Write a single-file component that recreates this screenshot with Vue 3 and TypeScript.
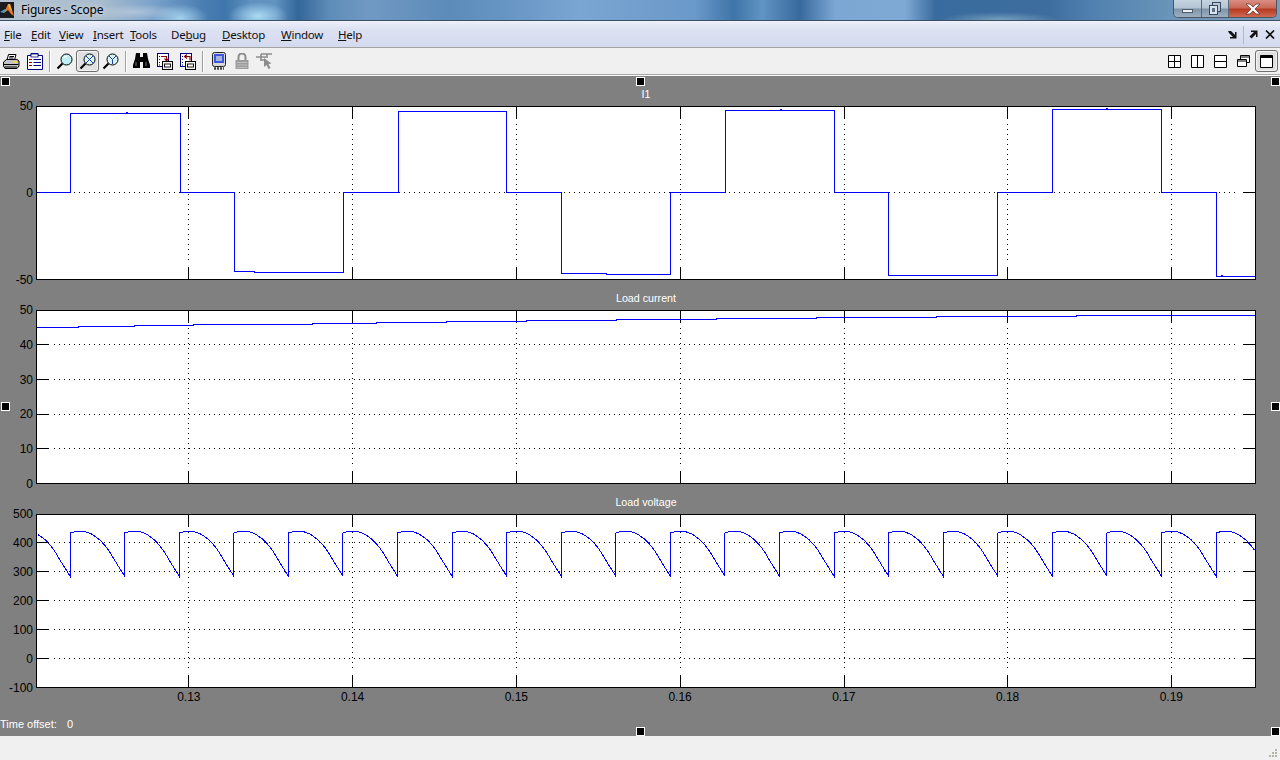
<script setup lang="ts">
interface MenuItem { before: string; key: string; after: string; width: number }
interface Plot { title: string; labels: string[]; ticks: number[]; wave: string }

const W = 1220
const H = 174
const gridX: number[] = [152, 316, 480, 644, 808, 971, 1135]
const xLabels: string[] = ['0.13', '0.14', '0.15', '0.16', '0.17', '0.18', '0.19']

const menu: MenuItem[] = [
  { before: '', key: 'F', after: 'ile', width: 27 },
  { before: '', key: 'E', after: 'dit', width: 28 },
  { before: '', key: 'V', after: 'iew', width: 34 },
  { before: '', key: 'I', after: 'nsert', width: 37 },
  { before: '', key: 'T', after: 'ools', width: 41 },
  { before: 'De', key: 'b', after: 'ug', width: 51 },
  { before: '', key: 'D', after: 'esktop', width: 59 },
  { before: '', key: 'W', after: 'indow', width: 57 },
  { before: '', key: 'H', after: 'elp', width: 40 },
]

function squareWave(): string {
  const edges: Array<[number, number]> = [
    [34, 7.5], [90, 6.5], [91, 7.5], [144, 86.5], [198, 165.5], [218, 166.5], [307, 86.5], [362, 5.5], [470, 86.5], [525, 167.5], [570, 168.5],
    [634, 86.5], [689, 4.5], [744, 3.5], [745, 4.5], [798, 86.5], [852, 169.5], [961, 86.5], [1016, 3.5], [1070, 2.5], [1071, 3.5], [1125, 86.5], [1180, 170.5], [1185, 169.5], [1186, 170.5],
  ]
  let y = 86.5
  const pts: string[] = [`0,${y}`]
  for (const [x, level] of edges) {
    pts.push(`${x + 0.5},${y}`, `${x + 0.5},${level}`)
    y = level
  }
  pts.push(`${W},${y}`)
  return pts.join(' ')
}

function currentWave(): string {
  const steps: Array<[number, number]> = [
    [0, 17.5], [42, 16.5], [98, 15.5], [157, 14.5], [216, 14.5], [276, 13.5], [340, 12.5], [410, 11.5],
    [490, 10.5], [580, 9.5], [680, 8.5], [780, 7.5], [900, 6.5], [1040, 5.5],
  ]
  const pts: string[] = []
  steps.forEach(([x, y], i) => {
    const next = i + 1 < steps.length ? steps[i + 1][0] : W
    pts.push(`${x},${y}`, `${next},${y}`)
  })
  return pts.join(' ')
}

function voltageWave(): string {
  const period = 54.57
  const phase0 = 34
  const shape: Array<[number, number]> = [
    [0, 19], [0.06, 18], [0.18, 17], [0.3, 18], [0.4, 20], [0.55, 26], [0.65, 32], [0.73, 38], [0.85, 49], [1, 62],
  ]
  const at = (p: number): number => {
    for (let i = 1; i < shape.length; i++) {
      if (p <= shape[i][0]) {
        const [a, ya] = shape[i - 1]
        const [b, yb] = shape[i]
        return ya + ((p - a) / (b - a)) * (yb - ya)
      }
    }
    return 62
  }
  const pts: string[] = []
  for (let n = -1; n < 23; n++) {
    const start = phase0 + n * period
    for (let k = 0; k <= 24; k++) {
      const x = start + (k / 24) * period
      if (x < 0 || x > W) continue
      pts.push(`${x.toFixed(1)},${at(k / 24).toFixed(1)}`)
    }
  }
  return pts.join(' ')
}

const plots: Plot[] = [
  { title: 'I1', labels: ['50', '0', '-50'], ticks: [86], wave: squareWave() },
  { title: 'Load current', labels: ['50', '40', '30', '20', '10', '0'], ticks: [34, 69, 104, 138], wave: currentWave() },
  { title: 'Load voltage', labels: ['500', '400', '300', '200', '100', '0', '-100'], ticks: [28, 57, 86, 115, 144], wave: voltageWave() },
]

const handles: string[] = ['tl', 'tc', 'tr', 'ml', 'mr', 'bc', 'br']
const gripDots: Array<[number, number]> = [[8, 0], [8, 3], [5, 3], [8, 6], [5, 6], [2, 6]]
</script>

<template>
  <div class="window">
    <header class="titlebar">
      <svg class="logo" width="14" height="16" viewBox="0 0 14 16">
        <rect width="14" height="16" fill="#1a1a20" />
        <path d="M0 10 L5 7 L7 8 L4 11 Z" fill="#3f9fc8" />
        <path d="M4 11 L8 2 L10 2 L14 14 L11 12 L8 8 Z" fill="#e8792a" />
        <path d="M8 2 L10 2 L12 9 L9 6 Z" fill="#f3b14a" />
      </svg>
      <span class="title-text">Figures - Scope</span>
      <div class="caption">
        <button class="cap cap-min" type="button" aria-label="Minimize"><i class="min-bar"></i></button>
        <button class="cap cap-max" type="button" aria-label="Restore">
          <svg width="12" height="13" viewBox="0 0 12 13">
            <rect x="3.5" y="0.5" width="8" height="9" fill="#b8c8d8" stroke="#39495a" />
            <rect x="0.5" y="3.5" width="8" height="9" fill="#d8e2ec" stroke="#39495a" />
            <rect x="3" y="6" width="3" height="4" fill="#5d7186" />
          </svg>
        </button>
        <button class="cap cap-close" type="button" aria-label="Close">
          <svg width="16" height="12" viewBox="0 0 16 12">
            <path d="M1 1 H5 L8 4 L11 1 H15 L10 6 L15 11 H11 L8 8 L5 11 H1 L6 6 Z" fill="#f4f4f4" stroke="#6e3a36" stroke-width="0.8" />
          </svg>
        </button>
      </div>
    </header>

    <nav class="menubar">
      <span v-for="m in menu" :key="m.key + m.after" class="menu-item" :style="{ width: m.width + 'px' }">{{ m.before }}<u>{{ m.key }}</u>{{ m.after }}</span>
      <div class="menu-end">
        <svg width="9" height="9" viewBox="0 0 9 9"><path d="M0 1 H3 L7 5 V2 H8.5 V8.5 H2 V7 H5 L1 3 Z" fill="#111" /></svg>
        <i class="menu-sep"></i>
        <svg width="9" height="9" viewBox="0 0 9 9"><path d="M8.5 0.5 H2 V2 H5 L0.5 6.5 L2.5 8.5 L7 4 V7 H8.5 Z" fill="#111" /></svg>
        <svg width="10" height="9" viewBox="0 0 10 9"><path d="M1 0.5 L9 8.5 M9 0.5 L1 8.5" stroke="#111" stroke-width="1.7" fill="none" /></svg>
      </div>
    </nav>

    <div class="toolbar">
      <button class="tool" type="button" aria-label="Print">
        <svg width="17" height="17" viewBox="0 0 17 17">
          <path d="M5.5 1.5 H13 L11.5 7 H4 Z" fill="#fff" stroke="#000" />
          <path d="M6.5 3.5 H11 M6 5 H10.5" stroke="#000" />
          <path d="M3.5 6.5 H14 L16 8 V13 L14 15.5 H2 L0.5 13 V9 Z" fill="#c4c4c4" stroke="#000" />
          <path d="M1 11.5 H15.5 M2 14 H14" stroke="#000" />
          <rect x="11" y="8" width="3" height="2" fill="#e8d860" />
        </svg>
      </button>
      <button class="tool" type="button" aria-label="Print preview">
        <svg width="16" height="17" viewBox="0 0 16 17">
          <path d="M0.5 2.5 H4 V0.5 H11 V2.5 H15.5 V16.5 H0.5 Z" fill="#fff" stroke="#000080" />
          <rect x="4" y="1" width="7" height="3" fill="#fff" stroke="#000080" stroke-width="0.8" />
          <path d="M2 6.5 H5 M2 9.5 H5 M2 12.5 H5" stroke="#a00000" />
          <path d="M6.5 6.5 H14 M6.5 9.5 H14 M6.5 12.5 H14" stroke="#000080" />
        </svg>
      </button>
      <i class="tool-sep"></i>
      <button class="tool" type="button" aria-label="Zoom in">
        <svg width="17" height="17" viewBox="0 0 17 17">
          <circle cx="10.5" cy="6.5" r="5.5" fill="#bfeff2" stroke="#000" />
          <path d="M8 4.5 A4 4 0 0 1 11 3.5" stroke="#fff" fill="none" stroke-width="1.4" />
          <path d="M6.5 10.5 L1.5 15.5" stroke="#000" stroke-width="2.2" />
        </svg>
      </button>
      <button class="tool tool-on" type="button" aria-label="Zoom X">
        <svg width="17" height="17" viewBox="0 0 17 17">
          <circle cx="10.5" cy="6.5" r="5.5" fill="#d8f4f6" stroke="#000" />
          <path d="M7 3 L14 10 M14 3 L7 10" stroke="#1a3fa8" />
          <path d="M6.5 10.5 L1.5 15.5" stroke="#000" stroke-width="2.2" />
        </svg>
      </button>
      <button class="tool" type="button" aria-label="Zoom Y">
        <svg width="17" height="17" viewBox="0 0 17 17">
          <circle cx="10.5" cy="6.5" r="5.5" fill="#d8f4f6" stroke="#000" />
          <path d="M7 3 L10.5 6.5 L14 3 M10.5 6.5 V11" stroke="#1a3fa8" fill="none" />
          <path d="M6.5 10.5 L1.5 15.5" stroke="#000" stroke-width="2.2" />
        </svg>
      </button>
      <i class="tool-sep tool-sep-wide"></i>
      <button class="tool" type="button" aria-label="Autoscale">
        <svg width="17" height="16" viewBox="0 0 17 16">
          <path d="M3 0 H7 V4 H10 V0 H14 L15 6 L17 12 V15 H10 V9 H7 V15 H0 V12 L2 6 Z" fill="#000" />
          <path d="M3 9 V13 M13 9 V13" stroke="#777" />
        </svg>
      </button>
      <button class="tool" type="button" aria-label="Save axes">
        <svg width="16" height="17" viewBox="0 0 16 17">
          <rect x="0.5" y="0.5" width="11" height="13" fill="#fff" stroke="#000080" />
          <path d="M2 3.5 H3 M2 6.5 H3 M2 9.5 H3 M2 12 H3 M5 12 H8" stroke="#000080" />
          <path d="M4 3.5 H9.5 V7 M7.5 5.5 L9.5 8 L11.5 5.5" stroke="#8c0000" fill="none" stroke-width="1.2" />
          <rect x="5.5" y="8.5" width="10" height="8" fill="#f4f4f4" stroke="#000" />
          <rect x="7.5" y="11" width="6" height="3" fill="#fff" stroke="#000" stroke-width="0.9" />
        </svg>
      </button>
      <button class="tool" type="button" aria-label="Restore axes">
        <svg width="16" height="17" viewBox="0 0 16 17">
          <rect x="0.5" y="0.5" width="11" height="13" fill="#fff" stroke="#000080" />
          <path d="M2 3.5 H3 M2 6.5 H3 M2 9.5 H3 M2 12 H3 M5 12 H8" stroke="#000080" />
          <path d="M10 7.5 V3.5 H5 M7 1.5 L4.5 3.5 L7 5.5" stroke="#8c0000" fill="none" stroke-width="1.2" />
          <rect x="5.5" y="8.5" width="10" height="8" fill="#f4f4f4" stroke="#000" />
          <rect x="7.5" y="11" width="6" height="3" fill="#fff" stroke="#000" stroke-width="0.9" />
        </svg>
      </button>
      <i class="tool-sep tool-sep-wide"></i>
      <button class="tool" type="button" aria-label="Parameters">
        <svg width="14" height="18" viewBox="0 0 14 18">
          <rect x="0.5" y="0.5" width="13" height="14" rx="2" fill="#d8d8d8" stroke="#222" />
          <rect x="2" y="2" width="10" height="9" fill="#3e57d8" />
          <rect x="4" y="4" width="6" height="5" fill="#a8b4e0" />
          <path d="M2 16.5 H12" stroke="#444" stroke-width="2.4" stroke-dasharray="2 1" />
        </svg>
      </button>
      <button class="tool" type="button" aria-label="Lock">
        <svg width="14" height="16" viewBox="0 0 14 16">
          <path d="M3.5 7 V4 A3.5 3.5 0 0 1 10.5 4 V7" fill="none" stroke="#8c8c8c" stroke-width="2" />
          <rect x="0.5" y="7" width="13" height="9" fill="#9c9c9c" />
          <path d="M2 9.5 H12 M2 12 H12 M2 14.5 H12" stroke="#c0c0c0" />
        </svg>
      </button>
      <button class="tool" type="button" aria-label="Signal selector">
        <svg width="17" height="16" viewBox="0 0 17 16">
          <path d="M0 4 H10 M5 1 H16 M5 7 H9" stroke="#8c8c8c" stroke-width="1.6" />
          <path d="M5 1 V8 M11 1 V5" stroke="#8c8c8c" stroke-width="1.6" />
          <path d="M8 5 L8 14 L10.5 12 L12.5 16 L14.5 15 L12.5 11 L15.5 10.5 Z" fill="#8c8c8c" />
        </svg>
      </button>
      <div class="tool-end">
        <button class="tool" type="button" aria-label="Two by two">
          <svg width="13" height="13" viewBox="0 0 13 13"><path d="M0.5 0.5 H12.5 V12.5 H0.5 Z M6.5 0.5 V12.5 M0.5 6.5 H12.5" fill="#fff" stroke="#000" /></svg>
        </button>
        <button class="tool" type="button" aria-label="Two columns">
          <svg width="13" height="13" viewBox="0 0 13 13"><path d="M0.5 0.5 H12.5 V12.5 H0.5 Z M6.5 0.5 V12.5" fill="#fff" stroke="#000" /></svg>
        </button>
        <button class="tool" type="button" aria-label="Two rows">
          <svg width="13" height="13" viewBox="0 0 13 13"><path d="M0.5 0.5 H12.5 V12.5 H0.5 Z M0.5 6.5 H12.5" fill="#fff" stroke="#000" /></svg>
        </button>
        <button class="tool" type="button" aria-label="Floating">
          <svg width="13" height="12" viewBox="0 0 13 12">
            <path d="M3.5 0.5 H12.5 V7.5 H3.5 Z" fill="#fff" stroke="#000" />
            <path d="M3.5 2 H12.5" stroke="#000" />
            <path d="M0.5 4.5 H9.5 V11.5 H0.5 Z" fill="#fff" stroke="#000" />
            <path d="M0.5 6 H9.5" stroke="#000" />
          </svg>
        </button>
        <button class="tool tool-on" type="button" aria-label="Single">
          <svg width="13" height="13" viewBox="0 0 13 13">
            <path d="M0.5 0.5 H12.5 V12.5 H0.5 Z" fill="#fff" stroke="#000" />
            <path d="M0.5 2 H12.5" stroke="#000" stroke-width="2" />
          </svg>
        </button>
      </div>
    </div>

    <main class="scope">
      <section v-for="p in plots" :key="p.title" class="panel">
        <h2 class="plot-title">{{ p.title }}</h2>
        <div class="plot-row">
          <div class="y-labels">
            <span v-for="l in p.labels" :key="l" class="y-label">{{ l }}</span>
          </div>
          <svg class="plot" :width="W" :height="H" :viewBox="`0 0 ${W} ${H}`">
            <rect x="0" y="0" :width="W" :height="H" fill="#fff" />
            <g stroke="#000" stroke-dasharray="1 4" shape-rendering="crispEdges">
              <line v-for="x in gridX" :key="'v' + x" :x1="x + 0.5" :x2="x + 0.5" y1="18" :y2="H - 17" />
              <line v-for="t in p.ticks" :key="'h' + t" x1="18" :x2="W - 17" :y1="t + 0.5" :y2="t + 0.5" />
            </g>
            <g stroke="#000" shape-rendering="crispEdges">
              <template v-for="x in gridX" :key="'t' + x">
                <line :x1="x + 0.5" :x2="x + 0.5" y1="0" y2="13" />
                <line :x1="x + 0.5" :x2="x + 0.5" :y1="H - 13" :y2="H" />
              </template>
              <template v-for="t in p.ticks" :key="'k' + t">
                <line x1="0" x2="13" :y1="t + 0.5" :y2="t + 0.5" />
                <line :x1="W - 13" :x2="W" :y1="t + 0.5" :y2="t + 0.5" />
              </template>
            </g>
            <polyline :points="p.wave" fill="none" stroke="#0000ff" stroke-width="1" shape-rendering="crispEdges" />
            <rect x="0.5" y="0.5" :width="W - 1" :height="H - 1" fill="none" stroke="#000" shape-rendering="crispEdges" />
          </svg>
        </div>
      </section>
      <div class="x-labels">
        <span v-for="l in xLabels" :key="l" class="x-label">{{ l }}</span>
      </div>
      <div class="offset"><span class="offset-name">Time offset:</span><span>0</span></div>
      <i v-for="h in handles" :key="h" class="handle" :class="'h-' + h"></i>
    </main>

    <footer class="statusbar">
      <svg class="grip" width="11" height="9" viewBox="0 0 11 9">
        <rect v-for="d in gripDots" :key="d.join()" :x="d[0]" :y="d[1]" width="2" height="2" fill="#b4b4a8" />
      </svg>
    </footer>
  </div>
</template>

<style scoped>
.window {
  width: 1280px;
  height: 760px;
  display: flex;
  flex-direction: column;
  overflow: hidden;
  font-family: "Liberation Sans", Arial, sans-serif;
  background: #f0f0f0;
}
.titlebar {
  height: 21px;
  flex: none;
  display: flex;
  align-items: center;
  position: relative;
  box-sizing: border-box;
  padding-bottom: 1px;
  border-bottom: 1px solid #3c5064;
  background:
    radial-gradient(ellipse 28px 14px at 180px 18px, rgba(170, 215, 240, 0.9), transparent),
    radial-gradient(ellipse 30px 14px at 258px 16px, rgba(175, 222, 245, 0.95), transparent),
    radial-gradient(ellipse 60px 8px at 1000px 20px, rgba(170, 200, 215, 0.55), transparent),
    radial-gradient(ellipse 50px 8px at 135px 12px, rgba(205, 215, 225, 0.55), transparent),
    linear-gradient(90deg, #b3c1cf 0, #a9bccd 100px, #7da4cc 150px, #4c80b4 200px, #3f76ab 225px, #5f90bf 250px, #6294c2 275px, #33669a 298px, #5f8db9 330px, #7099c2 370px, #5c8bba 450px, #6d9ac8 530px, #7aa6d3 580px, #6f9ccb 660px, #6a9aca 695px, #3e74a8 734px, #6094c3 762px, #386a9e 800px, #7ca7d4 835px, #7ea9d5 905px, #396c9e 935px, #3d6d9e 1048px, #4f80af 1090px, #6a94b9 1170px, #7a9cb8 1280px);
}
.logo {
  flex: none;
  margin-left: 0;
}
.title-text {
  margin-left: 7px;
  font-family: "Noto Sans", "Open Sans", sans-serif;
  font-size: 12px;
  letter-spacing: -0.2px;
  color: #000;
  text-shadow: 0 0 6px rgba(255, 255, 255, 0.7);
}
.caption {
  position: absolute;
  top: 0;
  right: 3px;
  height: 18px;
  display: flex;
  box-sizing: border-box;
  border: 1px solid #4a5560;
  border-top: none;
  border-radius: 0 0 5px 5px;
  overflow: hidden;
}
.cap {
  padding: 0;
  margin: 0;
  border: none;
  display: flex;
  align-items: center;
  justify-content: center;
  background: linear-gradient(180deg, #c6d4e0 0, #b4c4d3 48%, #7f93a8 52%, #9cb0c2 100%);
}
.cap-min { width: 28px; border-right: 1px solid #5d6a76; }
.cap-max { width: 27px; border-right: 1px solid #5d6a76; }
.cap-close {
  width: 47px;
  background: linear-gradient(180deg, #d98f82 0, #c9695a 45%, #b93a24 55%, #cf6a52 100%);
}
.min-bar {
  display: block;
  width: 11px;
  height: 4px;
  margin-top: 4px;
  background: #eef2f6;
  border: 1px solid #4f5b66;
  box-sizing: border-box;
}
.menubar {
  height: 26px;
  flex: none;
  box-sizing: border-box;
  display: flex;
  align-items: center;
  padding-left: 4px;
  padding-top: 1px;
  background: linear-gradient(180deg, #eef1fa 0, #dde2f3 30%, #d4daee 100%);
  font-family: "Noto Sans", "Open Sans", sans-serif;
  font-size: 11.5px;
  letter-spacing: -0.25px;
  color: #111;
}
.menu-item {
  flex: none;
  white-space: nowrap;
}
.menu-end {
  margin-left: auto;
  display: flex;
  align-items: center;
  padding-right: 5px;
}
.menu-end svg:nth-of-type(1) { margin-right: 6px; }
.menu-end svg:nth-of-type(2) { margin-right: 7px; }
.menu-sep {
  display: block;
  width: 1px;
  height: 18px;
  margin-right: 5px;
  background: #b4b8c4;
}
.toolbar {
  height: 29px;
  flex: none;
  box-sizing: border-box;
  display: flex;
  align-items: center;
  padding-bottom: 1px;
  background: #f0f0f0;
  border-top: 1px solid #a3a3a3;
  border-bottom: 1px solid #fafafa;
  box-shadow: inset 0 -1px 0 #a8a8a8;
}
.tool {
  flex: none;
  width: 23px;
  height: 22px;
  padding: 0;
  margin: 0;
  box-sizing: border-box;
  border: none;
  background: transparent;
  display: flex;
  align-items: center;
  justify-content: center;
}
.tool-on {
  border: 1px solid #6e6e6e;
  border-radius: 3px;
  background: #e0e0e0;
  box-shadow: inset 0 0 0 1px #f4f4f4;
}
.tool-sep {
  flex: none;
  display: block;
  width: 1px;
  height: 21px;
  margin: 0 3px;
  background: #a0a0a0;
  box-shadow: 1px 0 0 #fff;
}
.tool-sep-wide { margin: 0 4px 0 3px; }
.tool-end {
  margin-left: auto;
  margin-right: 2px;
  display: flex;
  align-items: center;
}
.scope {
  position: relative;
  height: 660px;
  flex: none;
  background: #808080;
  color: #fff;
}
.panel {
  display: flex;
  flex-direction: column;
  height: 204px;
}
.plot-title {
  height: 30px;
  margin: 0;
  box-sizing: border-box;
  padding: 10px 24px 0 36px;
  text-align: center;
  font-size: 10.7px;
  line-height: 17px;
  font-weight: normal;
  color: #fff;
}
.plot-row {
  display: flex;
  align-items: stretch;
}
.y-labels {
  width: 36px;
  flex: none;
  display: flex;
  flex-direction: column;
  justify-content: space-between;
  align-items: flex-end;
  padding-right: 3px;
  box-sizing: border-box;
  color: #000;
  font-size: 12px;
}
.y-label {
  height: 0;
  line-height: 0;
  white-space: nowrap;
}
.plot {
  display: block;
  flex: none;
}
.x-labels {
  display: flex;
  padding-left: 107px;
  color: #000;
  font-size: 12px;
  line-height: 14px;
  height: 14px;
  padding-top: 2px;
}
.x-label {
  flex: none;
  width: 163.75px;
  text-align: center;
}
.offset {
  display: flex;
  margin-top: 11px;
  font-size: 11px;
  line-height: 14px;
  padding-top: 2px;
  color: #fff;
}
.offset-name { width: 67px; }
.handle {
  position: absolute;
  width: 9px;
  height: 9px;
  box-sizing: border-box;
  background: #000;
  border: 1px solid #fff;
}
.h-tl { left: 1px; top: 1px; }
.h-tc { left: 636px; top: 1px; }
.h-tr { right: 0; top: 1px; }
.h-ml { left: 1px; top: 326px; }
.h-mr { right: 0; top: 326px; }
.h-bc { left: 636px; bottom: 0; }
.h-br { right: 0; bottom: 0; }
.statusbar {
  flex: 1;
  position: relative;
  background: #f0f0f0;
}
.grip {
  position: absolute;
  right: 2px;
  bottom: 2px;
}
</style>
